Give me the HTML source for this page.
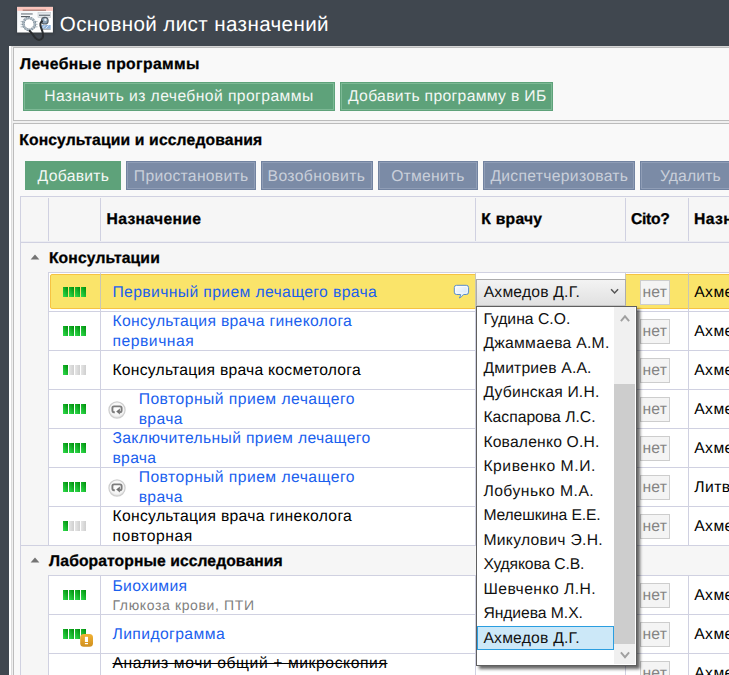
<!DOCTYPE html>
<html><head><meta charset="utf-8">
<style>
*{box-sizing:border-box;margin:0;padding:0}
html,body{width:729px;height:675px;overflow:hidden;background:#40474f;font-family:"Liberation Sans",sans-serif;}
.a{position:absolute}
.t{position:absolute;white-space:nowrap;line-height:1;text-rendering:geometricPrecision}
#root{position:relative;width:729px;height:675px;overflow:hidden;background:#40474f}
</style></head><body>
<div id="root">
<div class="a" style="left:9px;top:46px;width:730px;height:640px;background:#fff;"></div>
<div class="a" style="left:11px;top:46px;width:730px;height:640px;background:#f0f0f0;border-left:1px solid #dcdcdc;border-top:1px solid #d6d6d6"></div>
<div class="a" style="left:13px;top:47px;width:730px;height:74px;background:#f9f9f9;border:1px solid #bcbcbc"></div>
<div class="a" style="left:13px;top:123px;width:730px;height:600px;background:#f9f9f9;border:1px solid #bcbcbc"></div>
<div class="a" style="left:23px;top:82px;width:312px;height:29px;background:#5ea27a;box-shadow:inset 0 0 0 1px #5ea27a, inset 0 0 0 2px #7db995;"></div>
<div class="a" style="left:340px;top:82px;width:213px;height:29px;background:#5ea27a;box-shadow:inset 0 0 0 1px #5ea27a, inset 0 0 0 2px #7db995;"></div>
<div class="a" style="left:25px;top:161px;width:96px;height:29px;background:#5ea27a;"></div>
<div class="a" style="left:126px;top:161px;width:130px;height:29px;background:#7b8ba6;box-shadow:inset 0 0 0 1px #7283a0, inset 0 0 0 2px #8f9db6;"></div>
<div class="a" style="left:261px;top:161px;width:112px;height:29px;background:#7b8ba6;box-shadow:inset 0 0 0 1px #7283a0, inset 0 0 0 2px #8f9db6;"></div>
<div class="a" style="left:378px;top:161px;width:100px;height:29px;background:#7b8ba6;box-shadow:inset 0 0 0 1px #7283a0, inset 0 0 0 2px #8f9db6;"></div>
<div class="a" style="left:483px;top:161px;width:152px;height:29px;background:#7b8ba6;box-shadow:inset 0 0 0 1px #7283a0, inset 0 0 0 2px #8f9db6;"></div>
<div class="a" style="left:640px;top:161px;width:101px;height:29px;background:#7b8ba6;box-shadow:inset 0 0 0 1px #7283a0, inset 0 0 0 2px #8f9db6;"></div>
<div class="a" style="left:20px;top:196px;width:720px;height:500px;background:#f6f6f6;border-left:1px solid #d0d1e1;border-top:1px solid #d0d1e1"></div>
<div class="a" style="left:48px;top:198px;width:1px;height:44px;background:#d0d1e1;"></div>
<div class="a" style="left:100px;top:198px;width:1px;height:44px;background:#d0d1e1;"></div>
<div class="a" style="left:475px;top:198px;width:1px;height:44px;background:#d0d1e1;"></div>
<div class="a" style="left:625px;top:198px;width:1px;height:44px;background:#d0d1e1;"></div>
<div class="a" style="left:688px;top:198px;width:1px;height:44px;background:#d0d1e1;"></div>
<div class="a" style="left:21px;top:241px;width:720px;height:1px;background:#ecedf2;"></div>
<div class="a" style="left:21px;top:242px;width:720px;height:1px;background:#d0d1e1;"></div>
<div class="a" style="left:48px;top:272px;width:700px;height:274px;background:#fff;border-left:1px solid #d0d1e1;border-top:1px solid #d0d1e1"></div>
<div class="a" style="left:49px;top:311px;width:700px;height:1px;background:#d0d1e1;"></div>
<div class="a" style="left:49px;top:350px;width:700px;height:1px;background:#d0d1e1;"></div>
<div class="a" style="left:49px;top:389px;width:700px;height:1px;background:#d0d1e1;"></div>
<div class="a" style="left:49px;top:428px;width:700px;height:1px;background:#d0d1e1;"></div>
<div class="a" style="left:49px;top:467px;width:700px;height:1px;background:#d0d1e1;"></div>
<div class="a" style="left:49px;top:506px;width:700px;height:1px;background:#d0d1e1;"></div>
<div class="a" style="left:49px;top:545px;width:700px;height:1px;background:#d0d1e1;"></div>
<div class="a" style="left:100px;top:273px;width:1px;height:273px;background:#d0d1e1;"></div>
<div class="a" style="left:475px;top:273px;width:1px;height:273px;background:#d0d1e1;"></div>
<div class="a" style="left:625px;top:273px;width:1px;height:273px;background:#d0d1e1;"></div>
<div class="a" style="left:688px;top:273px;width:1px;height:273px;background:#d0d1e1;"></div>
<div class="a" style="left:48px;top:575px;width:700px;height:118px;background:#fff;border-left:1px solid #d0d1e1;border-top:1px solid #d0d1e1"></div>
<div class="a" style="left:49px;top:614px;width:700px;height:1px;background:#d0d1e1;"></div>
<div class="a" style="left:49px;top:653px;width:700px;height:1px;background:#d0d1e1;"></div>
<div class="a" style="left:49px;top:692px;width:700px;height:1px;background:#d0d1e1;"></div>
<div class="a" style="left:100px;top:576px;width:1px;height:117px;background:#d0d1e1;"></div>
<div class="a" style="left:475px;top:576px;width:1px;height:117px;background:#d0d1e1;"></div>
<div class="a" style="left:625px;top:576px;width:1px;height:117px;background:#d0d1e1;"></div>
<div class="a" style="left:688px;top:576px;width:1px;height:117px;background:#d0d1e1;"></div>
<div class="a" style="left:21px;top:545px;width:720px;height:1px;background:#d0d1e1;"></div>
<div class="a" style="left:50px;top:274px;width:700px;height:35px;background:#fae46a;border:1px solid #f6c342;border-radius:2px"></div>
<div class="a" style="left:100px;top:274px;width:1px;height:35px;background:#c9c6b4;"></div>
<div class="a" style="left:475px;top:274px;width:1px;height:35px;background:#c9c6b4;"></div>
<div class="a" style="left:625px;top:274px;width:1px;height:35px;background:#c9c6b4;"></div>
<div class="a" style="left:688px;top:274px;width:1px;height:35px;background:#c9c6b4;"></div>
<div class="a" style="left:476px;top:273px;width:149px;height:38px;background:#fff;"></div>
<svg class="a" style="left:30px;top:254.2px" width="10" height="6" viewBox="0 0 10 6"><path d="M0.6 5.6 L5 0.4 L9.4 5.6 Z" fill="#747474"/></svg>
<svg class="a" style="left:30px;top:557.2px" width="10" height="6" viewBox="0 0 10 6"><path d="M0.6 5.6 L5 0.4 L9.4 5.6 Z" fill="#747474"/></svg>
<svg class="a" style="left:63px;top:287px" width="24" height="10" viewBox="0 0 24 10"><defs><linearGradient id="gg" x1="0.9" y1="0" x2="0.1" y2="1"><stop offset="0" stop-color="#008f0c"/><stop offset="1" stop-color="#2fdc4c"/></linearGradient><linearGradient id="gr" x1="0" y1="0" x2="1" y2="0"><stop offset="0" stop-color="#e6e6e6"/><stop offset="1" stop-color="#cfcfcf"/></linearGradient></defs><rect x="0" y="0" width="5" height="10" fill="url(#gg)"/><rect x="6" y="0" width="5" height="10" fill="url(#gg)"/><rect x="12" y="0" width="5" height="10" fill="url(#gg)"/><rect x="18" y="0" width="5" height="10" fill="url(#gg)"/></svg>
<svg class="a" style="left:63px;top:326px" width="24" height="10" viewBox="0 0 24 10"><defs><linearGradient id="gg" x1="0.9" y1="0" x2="0.1" y2="1"><stop offset="0" stop-color="#008f0c"/><stop offset="1" stop-color="#2fdc4c"/></linearGradient><linearGradient id="gr" x1="0" y1="0" x2="1" y2="0"><stop offset="0" stop-color="#e6e6e6"/><stop offset="1" stop-color="#cfcfcf"/></linearGradient></defs><rect x="0" y="0" width="5" height="10" fill="url(#gg)"/><rect x="6" y="0" width="5" height="10" fill="url(#gg)"/><rect x="12" y="0" width="5" height="10" fill="url(#gg)"/><rect x="18" y="0" width="5" height="10" fill="url(#gg)"/></svg>
<svg class="a" style="left:63px;top:365px" width="24" height="10" viewBox="0 0 24 10"><defs><linearGradient id="gg" x1="0.9" y1="0" x2="0.1" y2="1"><stop offset="0" stop-color="#008f0c"/><stop offset="1" stop-color="#2fdc4c"/></linearGradient><linearGradient id="gr" x1="0" y1="0" x2="1" y2="0"><stop offset="0" stop-color="#e6e6e6"/><stop offset="1" stop-color="#cfcfcf"/></linearGradient></defs><rect x="0" y="0" width="5" height="10" fill="url(#gg)"/><rect x="6" y="0" width="5" height="10" fill="url(#gr)"/><rect x="12" y="0" width="5" height="10" fill="url(#gr)"/><rect x="18" y="0" width="5" height="10" fill="url(#gr)"/></svg>
<svg class="a" style="left:63px;top:404px" width="24" height="10" viewBox="0 0 24 10"><defs><linearGradient id="gg" x1="0.9" y1="0" x2="0.1" y2="1"><stop offset="0" stop-color="#008f0c"/><stop offset="1" stop-color="#2fdc4c"/></linearGradient><linearGradient id="gr" x1="0" y1="0" x2="1" y2="0"><stop offset="0" stop-color="#e6e6e6"/><stop offset="1" stop-color="#cfcfcf"/></linearGradient></defs><rect x="0" y="0" width="5" height="10" fill="url(#gg)"/><rect x="6" y="0" width="5" height="10" fill="url(#gg)"/><rect x="12" y="0" width="5" height="10" fill="url(#gg)"/><rect x="18" y="0" width="5" height="10" fill="url(#gg)"/></svg>
<svg class="a" style="left:63px;top:443px" width="24" height="10" viewBox="0 0 24 10"><defs><linearGradient id="gg" x1="0.9" y1="0" x2="0.1" y2="1"><stop offset="0" stop-color="#008f0c"/><stop offset="1" stop-color="#2fdc4c"/></linearGradient><linearGradient id="gr" x1="0" y1="0" x2="1" y2="0"><stop offset="0" stop-color="#e6e6e6"/><stop offset="1" stop-color="#cfcfcf"/></linearGradient></defs><rect x="0" y="0" width="5" height="10" fill="url(#gg)"/><rect x="6" y="0" width="5" height="10" fill="url(#gg)"/><rect x="12" y="0" width="5" height="10" fill="url(#gg)"/><rect x="18" y="0" width="5" height="10" fill="url(#gg)"/></svg>
<svg class="a" style="left:63px;top:482px" width="24" height="10" viewBox="0 0 24 10"><defs><linearGradient id="gg" x1="0.9" y1="0" x2="0.1" y2="1"><stop offset="0" stop-color="#008f0c"/><stop offset="1" stop-color="#2fdc4c"/></linearGradient><linearGradient id="gr" x1="0" y1="0" x2="1" y2="0"><stop offset="0" stop-color="#e6e6e6"/><stop offset="1" stop-color="#cfcfcf"/></linearGradient></defs><rect x="0" y="0" width="5" height="10" fill="url(#gg)"/><rect x="6" y="0" width="5" height="10" fill="url(#gg)"/><rect x="12" y="0" width="5" height="10" fill="url(#gg)"/><rect x="18" y="0" width="5" height="10" fill="url(#gg)"/></svg>
<svg class="a" style="left:63px;top:521px" width="24" height="10" viewBox="0 0 24 10"><defs><linearGradient id="gg" x1="0.9" y1="0" x2="0.1" y2="1"><stop offset="0" stop-color="#008f0c"/><stop offset="1" stop-color="#2fdc4c"/></linearGradient><linearGradient id="gr" x1="0" y1="0" x2="1" y2="0"><stop offset="0" stop-color="#e6e6e6"/><stop offset="1" stop-color="#cfcfcf"/></linearGradient></defs><rect x="0" y="0" width="5" height="10" fill="url(#gg)"/><rect x="6" y="0" width="5" height="10" fill="url(#gr)"/><rect x="12" y="0" width="5" height="10" fill="url(#gr)"/><rect x="18" y="0" width="5" height="10" fill="url(#gr)"/></svg>
<svg class="a" style="left:63px;top:590px" width="24" height="10" viewBox="0 0 24 10"><defs><linearGradient id="gg" x1="0.9" y1="0" x2="0.1" y2="1"><stop offset="0" stop-color="#008f0c"/><stop offset="1" stop-color="#2fdc4c"/></linearGradient><linearGradient id="gr" x1="0" y1="0" x2="1" y2="0"><stop offset="0" stop-color="#e6e6e6"/><stop offset="1" stop-color="#cfcfcf"/></linearGradient></defs><rect x="0" y="0" width="5" height="10" fill="url(#gg)"/><rect x="6" y="0" width="5" height="10" fill="url(#gg)"/><rect x="12" y="0" width="5" height="10" fill="url(#gg)"/><rect x="18" y="0" width="5" height="10" fill="url(#gg)"/></svg>
<svg class="a" style="left:63px;top:629px" width="24" height="10" viewBox="0 0 24 10"><defs><linearGradient id="gg" x1="0.9" y1="0" x2="0.1" y2="1"><stop offset="0" stop-color="#008f0c"/><stop offset="1" stop-color="#2fdc4c"/></linearGradient><linearGradient id="gr" x1="0" y1="0" x2="1" y2="0"><stop offset="0" stop-color="#e6e6e6"/><stop offset="1" stop-color="#cfcfcf"/></linearGradient></defs><rect x="0" y="0" width="5" height="10" fill="url(#gg)"/><rect x="6" y="0" width="5" height="10" fill="url(#gg)"/><rect x="12" y="0" width="5" height="10" fill="url(#gg)"/><rect x="18" y="0" width="5" height="10" fill="url(#gg)"/></svg>
<div class="a" style="left:640px;top:280px;width:30px;height:25px;background:#f4f4f4;border:1px solid #cdcdcd"></div>
<div class="a" style="left:640px;top:319px;width:30px;height:25px;background:#f4f4f4;border:1px solid #cdcdcd"></div>
<div class="a" style="left:640px;top:358px;width:30px;height:25px;background:#f4f4f4;border:1px solid #cdcdcd"></div>
<div class="a" style="left:640px;top:397px;width:30px;height:25px;background:#f4f4f4;border:1px solid #cdcdcd"></div>
<div class="a" style="left:640px;top:436px;width:30px;height:25px;background:#f4f4f4;border:1px solid #cdcdcd"></div>
<div class="a" style="left:640px;top:475px;width:30px;height:25px;background:#f4f4f4;border:1px solid #cdcdcd"></div>
<div class="a" style="left:640px;top:514px;width:30px;height:25px;background:#f4f4f4;border:1px solid #cdcdcd"></div>
<div class="a" style="left:640px;top:583px;width:30px;height:25px;background:#f4f4f4;border:1px solid #cdcdcd"></div>
<div class="a" style="left:640px;top:622px;width:30px;height:25px;background:#f4f4f4;border:1px solid #cdcdcd"></div>
<div class="a" style="left:640px;top:661px;width:30px;height:25px;background:#f4f4f4;border:1px solid #cdcdcd"></div>
<div class="a" style="left:476px;top:279px;width:150px;height:27px;background:linear-gradient(#f3f3f3,#e1e1e1);border:1px solid #acacac;border-bottom-color:#c4c4c4"></div>
<svg class="a" style="left:606px;top:284px" width="16" height="14" viewBox="606 284 16 14"><path d="M611.1 289.3 L614.6 292.9 L618.1 289.3" fill="none" stroke="#555" stroke-width="1.5"/></svg>
<div class="a" style="left:476px;top:306px;width:161px;height:360px;background:#fff;border:1px solid #5f5f5f;box-shadow:3px 3px 3px rgba(0,0,0,0.6);z-index:10"></div>
<div class="a" style="left:614px;top:307px;width:21px;height:357px;background:#f0f0f0;z-index:11"></div>
<div class="a" style="left:614px;top:384px;width:21px;height:259.5px;background:#cdcdcd;z-index:12"></div>
<div class="a" style="left:477px;top:626px;width:137px;height:24px;background:#cce8f8;border:1px solid #2b9ee0;z-index:12"></div>
<svg class="a" style="left:616px;top:310px;z-index:13" width="18" height="16" viewBox="616 310 18 16"><path d="M620.9 321.2 L625 316.3 L629.1 321.2" fill="none" stroke="#a0a0a0" stroke-width="1.9"/></svg>
<svg class="a" style="left:616px;top:646px;z-index:13" width="18" height="16" viewBox="616 646 18 16"><path d="M620.9 652.3 L625 657.2 L629.1 652.3" fill="none" stroke="#a0a0a0" stroke-width="1.9"/></svg>
<svg class="a" style="left:14px;top:3px" width="44" height="42" viewBox="14 3 44 42">
<defs><filter id="b1" x="-20%" y="-20%" width="140%" height="140%"><feGaussianBlur stdDeviation="0.5"/></filter>
<filter id="b2" x="-20%" y="-20%" width="140%" height="140%"><feGaussianBlur stdDeviation="0.9"/></filter>
<linearGradient id="doc" x1="0" y1="0" x2="1" y2="1"><stop offset="0" stop-color="#eef2f6"/><stop offset="0.6" stop-color="#ffffff"/></linearGradient></defs>
<rect x="16.8" y="6.8" width="36.8" height="27" fill="#2a3035" opacity="0.6" filter="url(#b2)"/>
<g filter="url(#b1)">
<rect x="17.1" y="6.9" width="35.8" height="25.6" fill="url(#doc)"/>
<rect x="17.1" y="6.9" width="35.8" height="4" fill="#fac5bd"/>
<rect x="22.7" y="9.7" width="23.3" height="0.9" fill="#8a5f57"/>
<rect x="21" y="13.3" width="11.7" height="1.3" fill="#6c757d" opacity="0.85"/>
<rect x="21" y="16" width="9" height="1.2" fill="#555d64"/>
<rect x="38" y="12.6" width="12.7" height="5" fill="#e1e6ea" stroke="#c2c8ce" stroke-width="0.6"/>
<rect x="39" y="14.7" width="11" height="1.1" fill="#5d666e"/>
<rect x="20.6" y="21.2" width="3" height="0.9" fill="#aab3ba"/><rect x="20.6" y="23.8" width="3" height="0.9" fill="#aab3ba"/><rect x="20.6" y="26.4" width="3" height="0.9" fill="#aab3ba"/>
<rect x="34" y="21.2" width="3.6" height="0.9" fill="#aab3ba"/><rect x="34" y="23.8" width="3.6" height="0.9" fill="#aab3ba"/><rect x="34" y="26.4" width="3.6" height="0.9" fill="#aab3ba"/>
<rect x="41.4" y="25" width="9.3" height="3.8" fill="#8fb3dc"/>
<path d="M42 28.6 L45 25.4 M45.5 28.6 L48.5 25.4" stroke="#e8f0f8" stroke-width="0.9"/>
<rect x="41.4" y="28.8" width="9.3" height="0.9" fill="#8a949c"/>
<ellipse cx="29.1" cy="23.9" rx="5.7" ry="5.9" fill="#ffffff" stroke="#7d8d99" stroke-width="2.7" stroke-dasharray="1.7 0.6" transform="rotate(-20 29.1 23.9)"/>
<ellipse cx="29.1" cy="23.9" rx="5.7" ry="5.9" fill="none" stroke="#a7b4be" stroke-width="1.2" transform="rotate(-20 29.1 23.9)"/>
<circle cx="44.8" cy="20.7" r="3.3" fill="#8aa0b4" stroke="#566069" stroke-width="1.2"/>
<circle cx="45.4" cy="19.8" r="1.2" fill="#eef3f7"/>
<path d="M29.5 30.8 C32 33 34 36.2 35.6 38.2 C37.4 40.4 40.6 40.6 42.4 38.2 C44.2 35.6 42.6 31.4 41.2 28 C40 25 39.6 22.8 42 21.4" fill="none" stroke="#2a2d30" stroke-width="2" stroke-linecap="round"/>
</g></svg>
<svg class="a" style="left:452px;top:283px" width="20" height="18" viewBox="452 283 20 18">
<defs><linearGradient id="bub" x1="0" y1="0" x2="1" y2="1"><stop offset="0" stop-color="#ffffff"/><stop offset="1" stop-color="#c9dff7"/></linearGradient>
<filter id="b3"><feGaussianBlur stdDeviation="0.35"/></filter></defs>
<path filter="url(#b3)" d="M456.6 285.3 H466.3 Q468.6 285.3 468.6 287.6 V292.2 Q468.6 294.5 466.3 294.5 H463.6 Q461.8 296.9 459.4 298 Q460.6 296.2 460.5 294.5 H456.6 Q454.3 294.5 454.3 292.2 V287.6 Q454.3 285.3 456.6 285.3 Z" fill="url(#bub)" stroke="#5a8dcb" stroke-width="1.0"/>
<rect x="455.6" y="286.5" width="11.6" height="6.6" rx="1.4" fill="none" stroke="#ffffff" stroke-width="0.8" opacity="0.85" filter="url(#b3)"/>
</svg>
<svg class="a" style="left:106.0px;top:398.5px" width="22" height="22" viewBox="-11 -11 22 22">
<defs><radialGradient id="rg" cx="0.5" cy="0.4" r="0.6"><stop offset="0" stop-color="#ffffff"/><stop offset="0.75" stop-color="#f4f4f4"/><stop offset="1" stop-color="#d9d9d9"/></radialGradient>
<filter id="b4"><feGaussianBlur stdDeviation="0.45"/></filter></defs>
<g filter="url(#b4)"><circle cx="0" cy="0" r="8.1" fill="url(#rg)" stroke="#cfcfcf" stroke-width="1.2"/>
<path d="M-2.2 2.2 H-3 Q-4.6 2.2 -4.6 0.6 V-2 Q-4.6 -3.6 -3 -3.6 H3 Q4.6 -3.6 4.6 -2 V0.6 Q4.6 2.2 3 2.2" fill="none" stroke="#7d7d7d" stroke-width="1.9"/>
<path d="M2.9 -1.4 L2.9 4.6 L-0.8 1.6 Z" fill="#6f6f6f"/></g></svg>
<svg class="a" style="left:106.0px;top:476.5px" width="22" height="22" viewBox="-11 -11 22 22">
<defs><radialGradient id="rg" cx="0.5" cy="0.4" r="0.6"><stop offset="0" stop-color="#ffffff"/><stop offset="0.75" stop-color="#f4f4f4"/><stop offset="1" stop-color="#d9d9d9"/></radialGradient>
<filter id="b4"><feGaussianBlur stdDeviation="0.45"/></filter></defs>
<g filter="url(#b4)"><circle cx="0" cy="0" r="8.1" fill="url(#rg)" stroke="#cfcfcf" stroke-width="1.2"/>
<path d="M-2.2 2.2 H-3 Q-4.6 2.2 -4.6 0.6 V-2 Q-4.6 -3.6 -3 -3.6 H3 Q4.6 -3.6 4.6 -2 V0.6 Q4.6 2.2 3 2.2" fill="none" stroke="#7d7d7d" stroke-width="1.9"/>
<path d="M2.9 -1.4 L2.9 4.6 L-0.8 1.6 Z" fill="#6f6f6f"/></g></svg>
<svg class="a" style="left:78px;top:632px" width="18" height="18" viewBox="78 632 18 18">
<defs><linearGradient id="wg" x1="0" y1="0" x2="0" y2="1"><stop offset="0" stop-color="#f2b233"/><stop offset="1" stop-color="#cf8f1f"/></linearGradient>
<filter id="b5"><feGaussianBlur stdDeviation="0.3"/></filter></defs>
<g filter="url(#b5)"><rect x="80.2" y="634" width="12.8" height="12.8" rx="3.6" fill="url(#wg)"/>
<rect x="84.9" y="636.8" width="3.1" height="5.2" fill="#fff"/><rect x="84.9" y="643" width="3.1" height="1.2" fill="#fff"/></g></svg>
<!--ICONS-->
<div class="t" style="left:59.81px;top:15px;font-size:20.6px;letter-spacing:0.379px;color:#fff;">Основной лист назначений</div>
<div class="t" style="left:20.08px;top:57px;font-size:15.7px;letter-spacing:0.396px;color:#000;font-weight:bold;-webkit-text-stroke:0.3px #000;">Лечебные программы</div>
<div class="t" style="left:44.15px;top:89px;font-size:15.7px;letter-spacing:0.415px;color:#f4f8f5;">Назначить из лечебной программы</div>
<div class="t" style="left:347.99px;top:89px;font-size:15.7px;letter-spacing:0.326px;color:#f4f8f5;">Добавить программу в ИБ</div>
<div class="t" style="left:19.19px;top:133px;font-size:15.7px;letter-spacing:0.141px;color:#000;font-weight:bold;-webkit-text-stroke:0.3px #000;">Консультации и исследования</div>
<div class="t" style="left:37.59px;top:169px;font-size:15.7px;letter-spacing:0.301px;color:#f4f8f5;">Добавить</div>
<div class="t" style="left:133.87px;top:169px;font-size:15.7px;letter-spacing:0.279px;color:#c9cfda;">Приостановить</div>
<div class="t" style="left:267.55px;top:169px;font-size:15.7px;letter-spacing:0.380px;color:#c9cfda;">Возобновить</div>
<div class="t" style="left:391.14px;top:169px;font-size:15.7px;letter-spacing:0.234px;color:#c9cfda;">Отменить</div>
<div class="t" style="left:490.39px;top:169px;font-size:15.7px;letter-spacing:0.301px;color:#c9cfda;">Диспетчеризовать</div>
<div class="t" style="left:659.95px;top:169px;font-size:15.7px;letter-spacing:0.131px;color:#c9cfda;">Удалить</div>
<div class="t" style="left:106.49px;top:212px;font-size:15.7px;letter-spacing:0.332px;color:#000;font-weight:bold;-webkit-text-stroke:0.3px #000;">Назначение</div>
<div class="t" style="left:481.29px;top:212px;font-size:15.7px;letter-spacing:0.246px;color:#000;font-weight:bold;-webkit-text-stroke:0.3px #000;">К врачу</div>
<div class="t" style="left:631.07px;top:212px;font-size:15.7px;letter-spacing:-0.338px;color:#000;font-weight:bold;-webkit-text-stroke:0.3px #000;">Cito?</div>
<div class="t" style="left:693.89px;top:212px;font-size:15.7px;letter-spacing:0.450px;color:#000;font-weight:bold;-webkit-text-stroke:0.3px #000;">Назначил</div>
<div class="t" style="left:48.89px;top:251px;font-size:15.7px;letter-spacing:0.132px;color:#000;font-weight:bold;-webkit-text-stroke:0.3px #000;">Консультации</div>
<div class="t" style="left:48.88px;top:554px;font-size:15.7px;letter-spacing:0.079px;color:#000;font-weight:bold;-webkit-text-stroke:0.3px #000;">Лабораторные исследования</div>
<div class="t" style="left:112.45px;top:285px;font-size:15.7px;letter-spacing:0.377px;color:#1a60ee;">Первичный прием лечащего врача</div>
<div class="t" style="left:112.45px;top:314px;font-size:15.7px;letter-spacing:0.319px;color:#1a60ee;">Консультация врача гинеколога</div>
<div class="t" style="left:112.45px;top:334px;font-size:15.7px;letter-spacing:0.536px;color:#1a60ee;">первичная</div>
<div class="t" style="left:112.45px;top:363px;font-size:15.7px;letter-spacing:0.244px;color:#000;">Консультация врача косметолога</div>
<div class="t" style="left:138.65px;top:392px;font-size:15.7px;letter-spacing:0.465px;color:#1a60ee;">Повторный прием лечащего</div>
<div class="t" style="left:138.65px;top:412px;font-size:15.7px;letter-spacing:0.379px;color:#1a60ee;">врача</div>
<div class="t" style="left:112.45px;top:431px;font-size:15.7px;letter-spacing:0.347px;color:#1a60ee;">Заключительный прием лечащего</div>
<div class="t" style="left:112.45px;top:451px;font-size:15.7px;letter-spacing:0.329px;color:#1a60ee;">врача</div>
<div class="t" style="left:138.65px;top:470px;font-size:15.7px;letter-spacing:0.465px;color:#1a60ee;">Повторный прием лечащего</div>
<div class="t" style="left:138.65px;top:490px;font-size:15.7px;letter-spacing:0.379px;color:#1a60ee;">врача</div>
<div class="t" style="left:112.45px;top:509px;font-size:15.7px;letter-spacing:0.319px;color:#000;">Консультация врача гинеколога</div>
<div class="t" style="left:112.45px;top:529px;font-size:15.7px;letter-spacing:0.537px;color:#000;">повторная</div>
<div class="t" style="left:112.45px;top:579px;font-size:15.7px;letter-spacing:0.332px;color:#1a60ee;">Биохимия</div>
<div class="t" style="left:112.45px;top:598px;font-size:14px;letter-spacing:0.627px;color:#808080;">Глюкоза крови, ПТИ</div>
<div class="t" style="left:112.45px;top:627px;font-size:15.7px;letter-spacing:0.411px;color:#1a60ee;">Липидограмма</div>
<div class="t" style="left:112.45px;top:656px;font-size:15.7px;letter-spacing:0.583px;color:#000;text-decoration:line-through">Анализ мочи общий + микроскопия</div>
<div class="t" style="left:694.18px;top:285px;font-size:15.7px;letter-spacing:0.450px;color:#000;">Ахмедов</div>
<div class="t" style="left:694.18px;top:324px;font-size:15.7px;letter-spacing:0.450px;color:#000;">Ахмедов</div>
<div class="t" style="left:694.18px;top:363px;font-size:15.7px;letter-spacing:0.450px;color:#000;">Ахмедов</div>
<div class="t" style="left:694.18px;top:402px;font-size:15.7px;letter-spacing:0.450px;color:#000;">Ахмедов</div>
<div class="t" style="left:694.18px;top:441px;font-size:15.7px;letter-spacing:0.450px;color:#000;">Ахмедов</div>
<div class="t" style="left:694.18px;top:519px;font-size:15.7px;letter-spacing:0.450px;color:#000;">Ахмедов</div>
<div class="t" style="left:694.18px;top:588px;font-size:15.7px;letter-spacing:0.450px;color:#000;">Ахмедов</div>
<div class="t" style="left:694.18px;top:627px;font-size:15.7px;letter-spacing:0.450px;color:#000;">Ахмедов</div>
<div class="t" style="left:694.18px;top:666px;font-size:15.7px;letter-spacing:0.450px;color:#000;">Ахмедов</div>
<div class="t" style="left:694.28px;top:480px;font-size:15.7px;letter-spacing:0.450px;color:#000;">Литвинов</div>
<div class="t" style="left:642.41px;top:285px;font-size:15.7px;letter-spacing:0.233px;color:#848484;">нет</div>
<div class="t" style="left:642.41px;top:324px;font-size:15.7px;letter-spacing:0.233px;color:#848484;">нет</div>
<div class="t" style="left:642.41px;top:363px;font-size:15.7px;letter-spacing:0.233px;color:#848484;">нет</div>
<div class="t" style="left:642.41px;top:402px;font-size:15.7px;letter-spacing:0.233px;color:#848484;">нет</div>
<div class="t" style="left:642.41px;top:441px;font-size:15.7px;letter-spacing:0.233px;color:#848484;">нет</div>
<div class="t" style="left:642.41px;top:480px;font-size:15.7px;letter-spacing:0.233px;color:#848484;">нет</div>
<div class="t" style="left:642.41px;top:519px;font-size:15.7px;letter-spacing:0.233px;color:#848484;">нет</div>
<div class="t" style="left:642.41px;top:588px;font-size:15.7px;letter-spacing:0.233px;color:#848484;">нет</div>
<div class="t" style="left:642.41px;top:627px;font-size:15.7px;letter-spacing:0.233px;color:#848484;">нет</div>
<div class="t" style="left:642.41px;top:666px;font-size:15.7px;letter-spacing:0.233px;color:#848484;">нет</div>
<div class="t" style="left:483.70px;top:285px;font-size:15.7px;letter-spacing:0.196px;color:#111;">Ахмедов Д.Г.</div>
<div class="t" style="left:483.40px;top:312px;font-size:15.7px;letter-spacing:0.019px;color:#111;z-index:20">Гудина С.О.</div>
<div class="t" style="left:483.40px;top:336px;font-size:15.7px;letter-spacing:0.274px;color:#111;z-index:20">Джаммаева А.М.</div>
<div class="t" style="left:483.40px;top:361px;font-size:15.7px;letter-spacing:0.180px;color:#111;z-index:20">Дмитриев А.А.</div>
<div class="t" style="left:483.40px;top:385px;font-size:15.7px;letter-spacing:0.197px;color:#111;z-index:20">Дубинская И.Н.</div>
<div class="t" style="left:483.40px;top:410px;font-size:15.7px;letter-spacing:0.012px;color:#111;z-index:20">Каспарова Л.С.</div>
<div class="t" style="left:483.40px;top:435px;font-size:15.7px;letter-spacing:0.182px;color:#111;z-index:20">Коваленко О.Н.</div>
<div class="t" style="left:483.40px;top:459px;font-size:15.7px;letter-spacing:0.547px;color:#111;z-index:20">Кривенко М.И.</div>
<div class="t" style="left:483.40px;top:484px;font-size:15.7px;letter-spacing:0.468px;color:#111;z-index:20">Лобунько М.А.</div>
<div class="t" style="left:483.40px;top:508px;font-size:15.7px;letter-spacing:-0.126px;color:#111;z-index:20">Мелешкина Е.Е.</div>
<div class="t" style="left:483.40px;top:533px;font-size:15.7px;letter-spacing:0.301px;color:#111;z-index:20">Микулович Э.Н.</div>
<div class="t" style="left:483.40px;top:557px;font-size:15.7px;letter-spacing:-0.133px;color:#111;z-index:20">Худякова С.В.</div>
<div class="t" style="left:483.40px;top:582px;font-size:15.7px;letter-spacing:0.465px;color:#111;z-index:20">Шевченко Л.Н.</div>
<div class="t" style="left:483.40px;top:606px;font-size:15.7px;letter-spacing:-0.056px;color:#111;z-index:20">Яндиева М.Х.</div>
<div class="t" style="left:483.40px;top:631px;font-size:15.7px;letter-spacing:0.214px;color:#111;z-index:20">Ахмедов Д.Г.</div>
</div>
</body></html>
